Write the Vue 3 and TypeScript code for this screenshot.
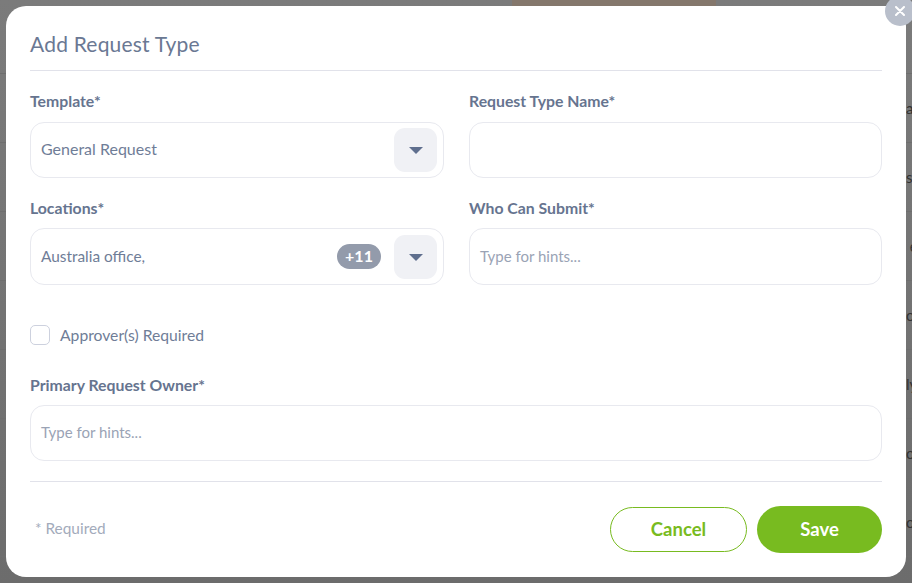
<script setup lang="ts">
interface Option {
  label: string
}
const template: Option = { label: 'General Request' }
const location: Option = { label: 'Australia office,' }
const extraLocations = 11
const pageRows: string[] = ['a', 's', ' e', 'or', 'ly', 'or', 'or']
</script>

<template>
  <div class="backdrop">
    <div class="page" aria-hidden="true">
      <div class="page-top"><span class="tag"></span></div>
      <div v-for="(text, i) in pageRows" :key="i" class="page-row">{{ text }}</div>
    </div>
    <div class="modal">
      <button class="close" type="button" aria-label="Close">
        <svg width="10" height="10" viewBox="0 0 10 10">
          <path d="M1 1 9 9M9 1 1 9" stroke="#fff" stroke-width="2" stroke-linecap="round" />
        </svg>
      </button>
      <h2 class="title">Add Request Type</h2>
      <div class="grid">
        <div class="field">
          <label>Template*</label>
          <div class="box">
            <span class="value template">{{ template.label }}</span>
            <span class="caret"><i /></span>
          </div>
        </div>
        <div class="field">
          <label>Request Type Name*</label>
          <div class="box"></div>
        </div>
        <div class="field second">
          <label>Locations*</label>
          <div class="box tall">
            <span class="value">{{ location.label }}</span>
            <span class="chip">+{{ extraLocations }}</span>
            <span class="caret"><i /></span>
          </div>
        </div>
        <div class="field second">
          <label>Who Can Submit*</label>
          <div class="box tall"><span class="hint">Type for hints...</span></div>
        </div>
      </div>
      <div class="check">
        <span class="tick"></span>
        <span>Approver(s) Required</span>
      </div>
      <div class="field owner">
        <label>Primary Request Owner*</label>
        <div class="box"><span class="hint">Type for hints...</span></div>
      </div>
      <div class="footer">
        <span class="required">* Required</span>
        <div class="actions">
          <button class="btn cancel" type="button">Cancel</button>
          <button class="btn save" type="button">Save</button>
        </div>
      </div>
    </div>
  </div>
</template>

<style>
html,
body {
  margin: 0;
  overflow: hidden;
}
</style>

<style scoped>
.backdrop {
  position: relative;
  width: 912px;
  height: 583px;
  box-sizing: border-box;
  padding: 6px;
  overflow: hidden;
  background: linear-gradient(#7b7b7b, #6c6c6c);
  font-family: Lato, "Open Sans", sans-serif;
  color: #6f7d97;
}
.page {
  position: absolute;
  inset: 0;
}
.page-top {
  height: 73px;
  border-bottom: 1px solid #6e6e6e;
}
.tag {
  display: block;
  width: 204px;
  height: 6px;
  margin-left: 512px;
  background: #84776c;
}
.page-row {
  height: 68px;
  padding-left: 906px;
  border-bottom: 1px solid #6e6e6e;
  font-size: 15px;
  line-height: 68px;
  color: #333;
  white-space: pre;
  overflow: hidden;
}
.modal {
  position: relative;
  height: 571px;
  box-sizing: border-box;
  padding: 0 24px;
  background: #fff;
  border-radius: 20px;
}
.close {
  position: absolute;
  top: -10px;
  right: -9px;
  width: 30px;
  height: 30px;
  border: 0;
  padding: 0;
  border-radius: 50%;
  background: #b9bfcb;
  display: flex;
  align-items: center;
  justify-content: center;
}
.title {
  margin: 0;
  height: 65px;
  box-sizing: border-box;
  padding-top: 24px;
  border-bottom: 1px solid #e1e2ea;
  font-size: 21px;
  line-height: 27px;
  font-weight: 400;
  letter-spacing: 0.2px;
  color: #6a7893;
}
.grid {
  display: grid;
  grid-template-columns: 414px 413px;
  column-gap: 25px;
}
.field {
  display: flex;
  flex-direction: column;
}
.field label {
  height: 20px;
  margin-top: 21px;
  margin-bottom: 10px;
  font-size: 15.8px;
  line-height: 18px;
  font-weight: 700;
  color: #66748f;
}
.field.second label {
  margin-top: 21px;
  margin-bottom: 9px;
}
.box {
  height: 56px;
  box-sizing: border-box;
  border: 1px solid #e8e9ef;
  border-radius: 14px;
  padding: 0 6px 0 10px;
  display: flex;
  align-items: center;
  font-size: 15.4px;
  line-height: 18px;
}
.box.tall {
  height: 57px;
}
.value {
  flex: 1;
  margin-top: -2px;
}
.value.template {
  font-size: 16px;
}
.hint {
  margin-top: -2px;
  font-size: 15px;
  color: #9aa3b5;
}
.caret {
  width: 43px;
  height: 44px;
  border-radius: 11px;
  background: #f0f1f5;
  display: flex;
  align-items: center;
  justify-content: center;
}
.caret i {
  width: 0;
  height: 0;
  margin-top: 1px;
  border-left: 7px solid transparent;
  border-right: 7px solid transparent;
  border-top: 7px solid #5f6f8e;
}
.chip {
  width: 44px;
  height: 25px;
  margin-right: 13px;
  border-radius: 13px;
  background: #939bab;
  color: #fff;
  font-size: 16px;
  font-weight: 700;
  line-height: 24px;
  text-align: center;
}
.check {
  margin-top: 40px;
  height: 20px;
  display: flex;
  align-items: center;
  gap: 10px;
  font-size: 15.7px;
}
.tick {
  width: 20px;
  height: 20px;
  box-sizing: border-box;
  border: 1px solid #cdd1de;
  border-radius: 5px;
}
.field.owner label {
  margin-top: 31px;
  margin-bottom: 9px;
}
.footer {
  margin-top: 20px;
  border-top: 1px solid #e1e2ea;
  padding-top: 24px;
  display: flex;
  align-items: center;
  justify-content: space-between;
}
.required {
  margin-left: 5px;
  margin-top: -3px;
  color: #a3abbb;
  font-size: 15.4px;
}
.actions {
  display: flex;
  align-items: center;
  gap: 10px;
}
.btn {
  font-family: inherit;
  font-size: 18.5px;
  font-weight: 700;
  border-radius: 24px;
  padding: 0 0 2px;
}
.cancel {
  width: 137px;
  height: 45px;
  background: #fff;
  border: 1px solid #78bb20;
  color: #78bb20;
}
.save {
  width: 125px;
  height: 47px;
  background: #78bb20;
  border: 0;
  color: #fff;
}
</style>
